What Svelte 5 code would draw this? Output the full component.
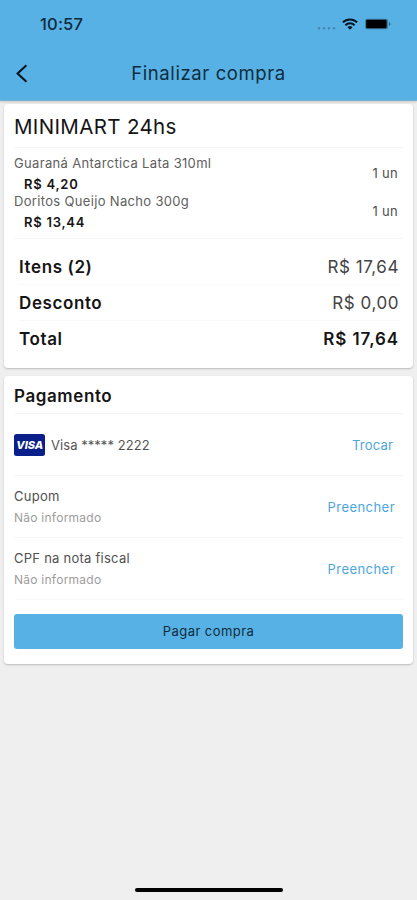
<script>
	let items = [
		{ name: 'Guaraná Antarctica Lata 310ml', price: 'R$ 4,20', qty: 1 },
		{ name: 'Doritos Queijo Nacho 300g', price: 'R$ 13,44', qty: 1 }
	];

	let totals = [
		{ label: `Itens (${items.length})`, value: 'R$ 17,64' },
		{ label: 'Desconto', value: 'R$ 0,00' },
		{ label: 'Total', value: 'R$ 17,64', strong: true }
	];

	let extras = [
		{ label: 'Cupom', value: 'Não informado' },
		{ label: 'CPF na nota fiscal', value: 'Não informado' }
	];
</script>

<div class="screen">
	<header>
		<div class="status">
			<span class="time">10:57</span>
			<div class="status-icons">
				<svg class="dots" width="20" height="12" viewBox="0 0 20 12">
					<g fill="#4488ae">
						<circle cx="2" cy="10.3" r="1.2" />
						<circle cx="7" cy="10.3" r="1.2" />
						<circle cx="12" cy="10.3" r="1.2" />
						<circle cx="17" cy="10.3" r="1.2" />
					</g>
				</svg>
				<svg class="wifi" width="16" height="12" viewBox="0 0 16 12">
					<g fill="none" stroke="#061621" stroke-width="2">
						<path d="M0.9 4.4A10.1 10.1 0 0 1 15.1 4.4" />
						<path d="M3.4 7.2A6.5 6.5 0 0 1 12.6 7.2" />
					</g>
					<path d="M5.5 9.2A3.7 3.7 0 0 1 10.5 9.2L8 11.8Z" fill="#061621" />
				</svg>
				<svg class="battery" width="27" height="12" viewBox="0 0 27 12">
					<rect x="0" y="0.7" width="23" height="10.6" rx="2.2" fill="#3c7ea3" />
					<rect x="1.2" y="1.7" width="20.4" height="8.6" rx="0.8" fill="#000" />
					<path d="M23.8 4Q25.6 4.8 25.6 6T23.8 8Z" fill="#2f6583" />
				</svg>
			</div>
		</div>
		<div class="nav">
			<button class="back" aria-label="Voltar">
				<svg width="14" height="20" viewBox="0 0 14 20">
					<path d="M12.4 1.2L3.6 9.5L12.4 17.8" fill="none" stroke="#04131c" stroke-width="2.1" />
				</svg>
			</button>
			<h1>Finalizar compra</h1>
		</div>
	</header>

	<main>
		<section class="card order">
			<h2>MINIMART 24hs</h2>
			<div class="items">
				{#each items as item}
					<div class="item">
						<div>
							<div class="name">{item.name}</div>
							<div class="price">{item.price}</div>
						</div>
						<span class="qty">{item.qty} un</span>
					</div>
				{/each}
			</div>
			<div class="totals">
				{#each totals as row}
					<div class="total" class:strong={row.strong}>
						<span class="label">{row.label}</span>
						<span class="value">{row.value}</span>
					</div>
				{/each}
			</div>
		</section>

		<section class="card payment">
			<h3>Pagamento</h3>
			<div class="method">
				<svg class="visa" width="31" height="22" viewBox="0 0 31 22">
					<rect width="31" height="22" rx="2.5" fill="#0b1f8a" />
					<text x="15.8" y="15" text-anchor="middle" textLength="27" lengthAdjust="spacingAndGlyphs">VISA</text>
				</svg>
				<span class="number">Visa ***** 2222</span>
				<button class="link swap">Trocar</button>
			</div>
			{#each extras as extra}
				<div class="extra">
					<div>
						<div class="extra-label">{extra.label}</div>
						<div class="extra-value">{extra.value}</div>
					</div>
					<button class="link">Preencher</button>
				</div>
			{/each}
			<button class="pay">Pagar compra</button>
		</section>
	</main>

	<footer><div class="home"></div></footer>
</div>

<style>
	:global(body) {
		background: #efefef;
	}

	.screen {
		display: flex;
		flex-direction: column;
		height: 900px;
		box-sizing: border-box;
		background: #efefef;
		font-family: Inter, 'Liberation Sans', sans-serif;
		color: #151515;
		overflow: hidden;
	}

	button {
		font-family: inherit;
		background: none;
		border: none;
		padding: 0;
		margin: 0;
	}

	h1,
	h2,
	h3 {
		margin: 0;
	}

	svg {
		display: block;
		flex: none;
	}

	/* Header */
	header {
		height: 100px;
		flex: none;
		background: #58b1e4;
		border-bottom: 1px solid #7fb4d0;
		box-shadow: 0 1px 2px rgba(0, 0, 0, 0.18);
	}

	.status {
		display: flex;
		justify-content: space-between;
		align-items: center;
		height: 48px;
		padding: 0 25px 0 40px;
	}

	.time {
		font-size: 16.5px;
		font-weight: 500;
		letter-spacing: 0.2px;
		color: #0b2a3b;
	}

	.status-icons {
		display: flex;
		align-items: center;
	}

	.wifi {
		margin-left: 5px;
	}

	.battery {
		margin-left: 7px;
	}

	.nav {
		display: grid;
		grid-template-columns: 40px 1fr 40px;
		align-items: center;
		height: 52px;
	}

	.back {
		padding-left: 14px;
	}

	h1 {
		padding-bottom: 2px;
		font-size: 18.5px;
		font-weight: 400;
		line-height: 24px;
		letter-spacing: 0.6px;
		text-align: center;
		color: #0d2c3d;
	}

	/* Cards */
	main {
		display: flex;
		flex-direction: column;
		gap: 8px;
		padding: 3px 4px 0;
	}

	.card {
		background: #fff;
		border-radius: 4px;
		padding: 0 10px;
		box-shadow: 0 1px 2px rgba(0, 0, 0, 0.22);
	}

	.order {
		height: 264px;
	}

	.payment {
		height: 288px;
	}

	h2 {
		height: 44px;
		line-height: 46px;
		box-sizing: border-box;
		border-bottom: 1px solid #f5f5f5;
		font-size: 20.5px;
		font-weight: 400;
		letter-spacing: 0.35px;
	}

	.items {
		padding: 6px 0 8px;
		border-bottom: 1px solid #f5f5f5;
	}

	.item {
		display: flex;
		justify-content: space-between;
		align-items: center;
		height: 38px;
		padding-right: 5px;
	}

	.name {
		font-size: 13px;
		line-height: 19px;
		letter-spacing: 0.33px;
		color: #606060;
	}

	.price {
		padding-left: 10px;
		font-size: 13px;
		font-weight: 600;
		line-height: 19px;
		letter-spacing: 0.75px;
		position: relative;
		top: 2px;
	}

	.qty {
		font-size: 13px;
		letter-spacing: 0.3px;
		color: #505050;
	}

	.totals {
		padding: 10px 4px 0 5px;
	}

	.total {
		display: flex;
		justify-content: space-between;
		align-items: center;
		height: 36px;
		box-sizing: border-box;
		font-size: 17px;
		border-bottom: 1px solid #f8f8f8;
	}

	.total:last-child {
		border-bottom-color: transparent;
	}

	.label {
		font-weight: 600;
		letter-spacing: 0.6px;
	}

	.value {
		letter-spacing: 0.55px;
		color: #444;
	}

	.strong .value {
		font-weight: 600;
		letter-spacing: 0.9px;
		color: #151515;
	}

	/* Payment */
	h3 {
		height: 38px;
		line-height: 40px;
		box-sizing: border-box;
		border-bottom: 1px solid #f5f5f5;
		font-size: 17px;
		font-weight: 600;
		letter-spacing: 0.6px;
	}

	.method,
	.extra {
		display: flex;
		align-items: center;
		height: 62px;
		box-sizing: border-box;
		border-bottom: 1px solid #f5f5f5;
	}

	.visa text {
		font-family: Inter, 'Liberation Sans', sans-serif;
		font-size: 11px;
		font-style: italic;
		font-weight: 800;
		fill: #fff;
	}

	.number {
		margin-left: 6px;
		font-size: 13px;
		letter-spacing: 0.05px;
		color: #555;
	}

	.link {
		margin-left: auto;
		padding-right: 8px;
		font-size: 13px;
		letter-spacing: 0.45px;
		color: #4da6dc;
	}

	.swap {
		padding-right: 10px;
		letter-spacing: 0.2px;
	}

	.extra-label {
		font-size: 13px;
		line-height: 22px;
		letter-spacing: 0.25px;
		color: #505050;
	}

	.extra-value {
		font-size: 12px;
		line-height: 21px;
		letter-spacing: 0.25px;
		color: #9d9d9d;
	}

	.extra:nth-last-child(2) {
		border-bottom-color: #fafafa;
	}

	.pay {
		display: block;
		width: 100%;
		height: 35px;
		margin-top: 14px;
		padding-bottom: 1px;
		border-radius: 3px;
		background: #58b1e4;
		font-size: 13px;
		letter-spacing: 0.45px;
		color: #0d2c3d;
	}

	/* Home indicator */
	footer {
		display: flex;
		justify-content: center;
		margin-top: auto;
		padding-bottom: 8px;
	}

	.home {
		width: 148px;
		height: 4px;
		border-radius: 2px;
		background: #000;
	}
</style>
